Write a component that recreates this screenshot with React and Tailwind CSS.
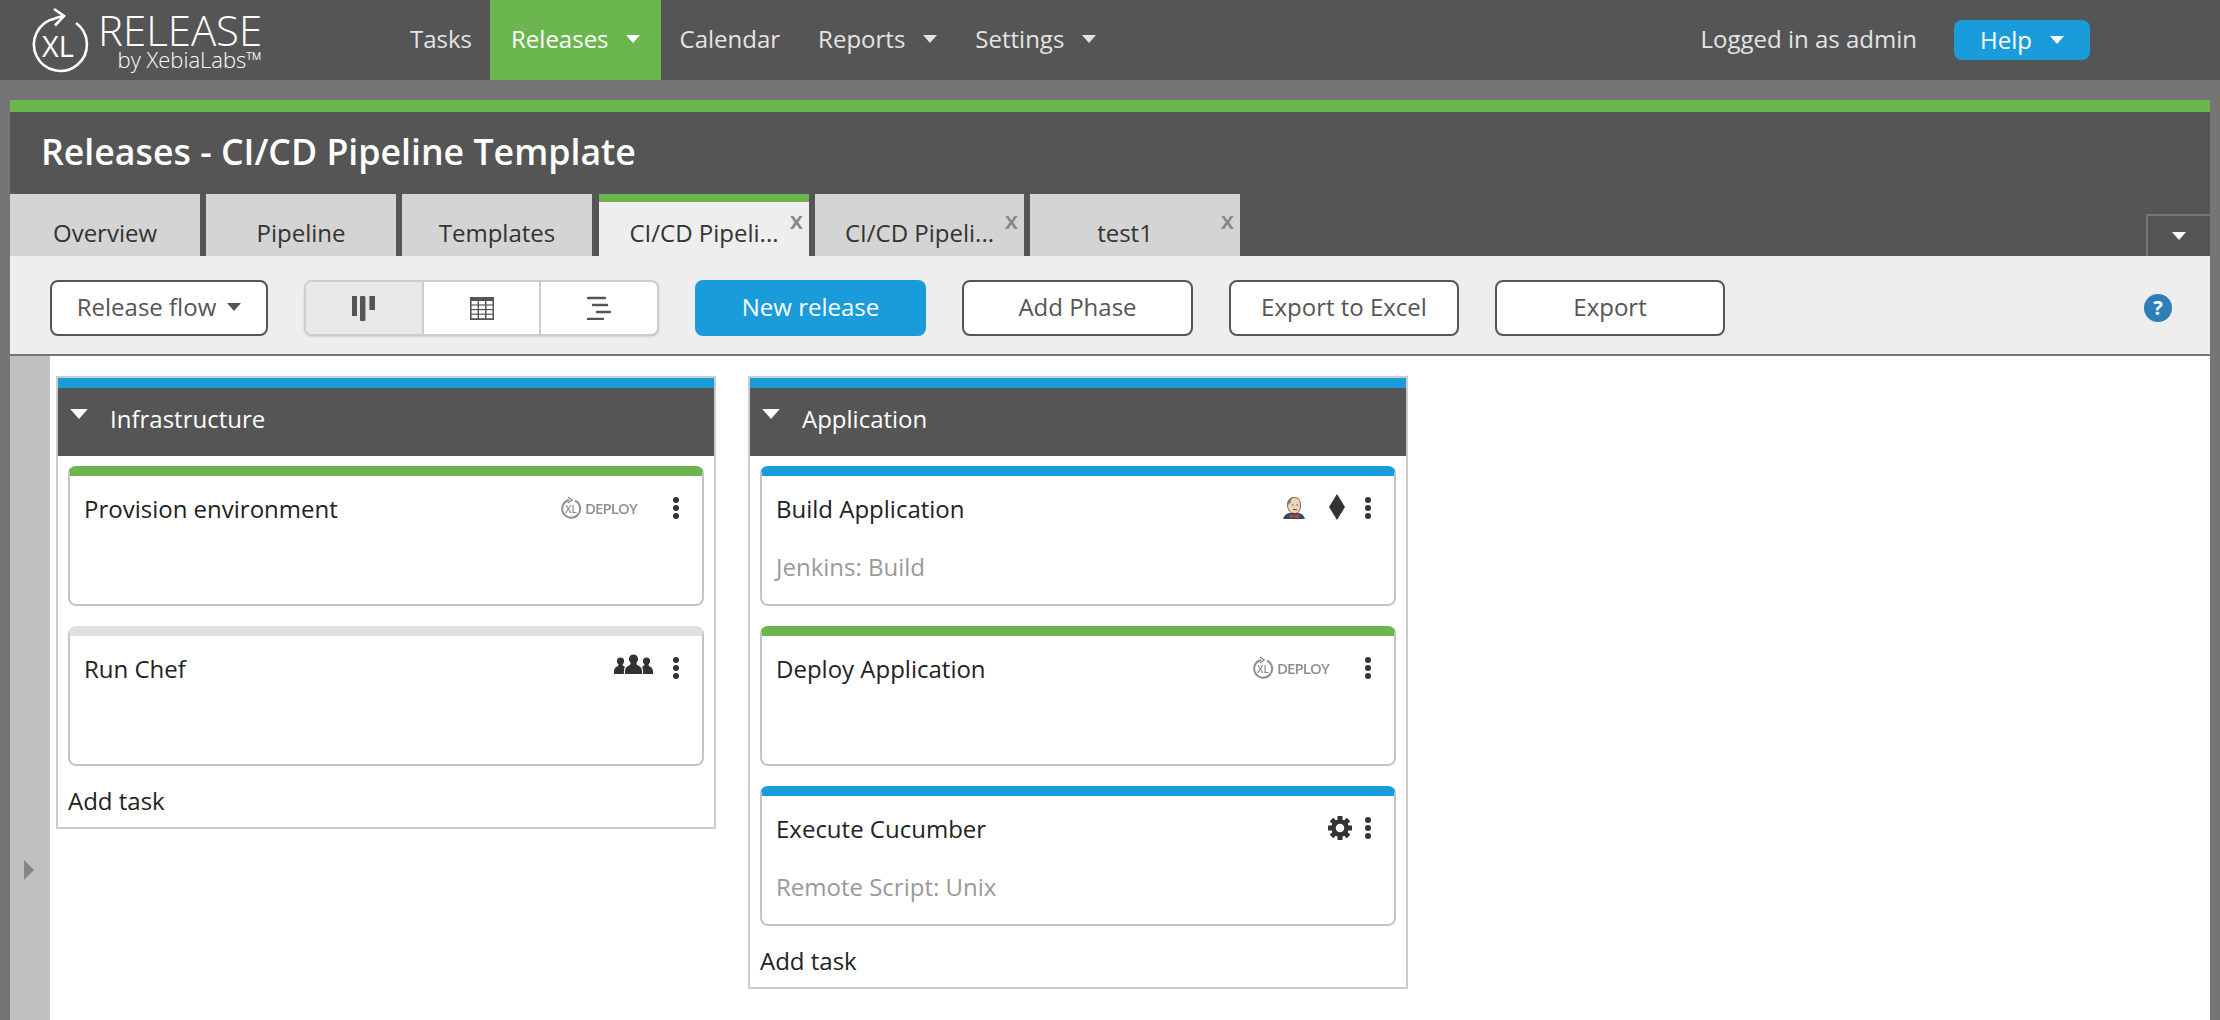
import React from "react";

function Caret({ className = "", color = "#e8e8e8" }) {
  return (
    <svg viewBox="0 0 14 8" className={className} width="14" height="8">
      <path d="M0 0h14L7 8z" fill={color} />
    </svg>
  );
}

function Logo() {
  return (
    <svg width="64" height="80" viewBox="0 0 64 80" className="ml-[27px] shrink-0">
      <path d="M28 18.500A26.500 26.500 0 1 0 49 23" fill="none" stroke="#fff" strokeWidth="2.600" />
      <path d="M28 18.500C31 17 34 16.500 37 16M27 9l10 7-9 9.500" fill="none" stroke="#fff" strokeWidth="2.600" />
      <text x="31" y="57" textAnchor="middle" fontSize="29" fill="#fff" fontFamily="'Open Sans'">
        XL
      </text>
    </svg>
  );
}

function NavItem({ label, caret, active, className = "" }) {
  return (
    <div
      className={`h-full flex items-center pb-[2px] ${
        active ? "bg-[#6cb650] text-white px-[21px] gap-[17px]" : "text-[#e4e4e4] px-[19px] gap-[18px]"
      } ${className}`}
    >
      <span>{label}</span>
      {caret && <Caret color={active ? "#fff" : "#e4e4e4"} />}
    </div>
  );
}

function TopNav() {
  return (
    <div className="h-20 shrink-0 bg-[#555555] flex items-center text-[24px]">
      <div className="w-[391px] h-full flex items-center text-white">
        <Logo />
        <div className="ml-[7px] pt-[2px] flex flex-col items-end">
          <span className="text-[42px] leading-[37px] font-light">RELEASE</span>
          <span className="text-[22px] leading-[23px] font-light">by XebiaLabs™</span>
        </div>
      </div>
      <NavItem label="Tasks" className="pr-[18px]" />
      <NavItem label="Releases" caret active />
      <NavItem label="Calendar" />
      <NavItem label="Reports" caret />
      <NavItem label="Settings" caret />
      <span className="ml-auto pb-[2px] text-[#e4e4e4]">Logged in as admin</span>
      <div className="ml-[37px] mr-[130px] w-[136px] h-10 rounded-lg bg-[#1a9cdb] text-white flex items-center justify-center gap-[18px]">
        Help
        <Caret color="#fff" />
      </div>
    </div>
  );
}

function Tab({ label, width, active, closable, className = "" }) {
  return (
    <div
      style={{ width }}
      className={`relative h-full flex items-center justify-center text-[24px] text-[#333] ${
        active ? "bg-[#eeeeee] border-t-8 border-[#6cb650] pt-[7px]" : "bg-[#d4d4d4] pt-[15px]"
      } ${className}`}
    >
      <span>{label}</span>
      {closable && (
        <span
          className={`absolute right-[6px] text-[24px] leading-6 font-semibold text-[#888] ${
            active ? "top-[6px]" : "top-[14px]"
          }`}
        >
          x
        </span>
      )}
    </div>
  );
}

function Tabs() {
  return (
    <div className="h-[62px] shrink-0 flex items-end">
      <div className="h-full flex gap-[6px]">
        <Tab label="Overview" width={190} />
        <Tab label="Pipeline" width={190} />
        <Tab label="Templates" width={190} />
        <div className="ml-px h-full">
          <Tab label="CI/CD Pipeli..." width={210} active closable />
        </div>
        <Tab label="CI/CD Pipeli..." width={209} closable />
        <Tab label="test1" width={210} closable className="pr-[20px]" />
      </div>
      <div className="ml-auto w-16 h-[42px] border-2 border-b-0 border-r-0 border-[#757575] flex items-center justify-center">
        <Caret color="#fff" />
      </div>
    </div>
  );
}

function ToolButton({ label, width, primary }) {
  return (
    <button
      style={{ width }}
      className={`h-14 pb-[2px] rounded-lg text-[24px] ${
        primary ? "bg-[#1a9cdb] text-white" : "bg-white border-2 border-[#555] text-[#555]"
      }`}
    >
      {label}
    </button>
  );
}

const tableRows = [4, 8.6, 13.2, 17.8];
const tableCols = [1.6, 9, 16.5];

function ViewSwitch() {
  return (
    <div className="w-[355px] h-14 flex rounded-lg bg-white border-2 border-[#cccccc] shadow-sm overflow-hidden">
      <div className="flex-1 bg-[#e8e8e8] border-r-2 border-[#cccccc] flex items-center justify-center">
        <svg width="23" height="25" viewBox="0 0 23 25" fill="#555">
          <rect x="0" y="0" width="5" height="20" />
          <rect x="8" y="0" width="5.4" height="25" rx="1" />
          <rect x="17.4" y="0" width="5.6" height="14" />
        </svg>
      </div>
      <div className="flex-1 border-r-2 border-[#cccccc] flex items-center justify-center">
        <svg width="24" height="23" viewBox="0 0 24 23">
          <rect width="24" height="23" fill="#555" />
          {tableRows.map((y) =>
            tableCols.map((x) => <rect key={`${x}-${y}`} x={x} y={y} width="6" height="3.4" fill="#fff" />)
          )}
        </svg>
      </div>
      <div className="flex-1 flex items-center justify-center">
        <svg width="24" height="24" viewBox="0 0 24 24" stroke="#555" strokeWidth="2.4" strokeLinecap="round">
          <path d="M1 2h17M6 9h14M10 16h13M1 23h15" />
        </svg>
      </div>
    </div>
  );
}

function Toolbar() {
  return (
    <div className="h-[100px] shrink-0 bg-[#eeeeee] border-b-2 border-[#757575] flex items-center gap-9 pl-10 pt-[6px]">
      <div className="w-[218px] h-14 pb-[2px] rounded-lg bg-white border-2 border-[#555] text-[24px] text-[#555] flex items-center justify-center gap-[11px]">
        Release flow
        <Caret color="#555" />
      </div>
      <ViewSwitch />
      <ToolButton label="New release" width={231} primary />
      <ToolButton label="Add Phase" width={231} />
      <ToolButton label="Export to Excel" width={230} />
      <ToolButton label="Export" width={230} />
      <div className="ml-auto mr-[38px] w-7 h-7 rounded-full bg-[#2d7fb8] text-white text-[20px] font-bold flex items-center justify-center">
        ?
      </div>
    </div>
  );
}

function Dots() {
  return (
    <svg width="8" height="24" viewBox="0 0 8 24" fill="#333" className="shrink-0">
      <circle cx="4" cy="4" r="3" />
      <circle cx="4" cy="12" r="3" />
      <circle cx="4" cy="20" r="3" />
    </svg>
  );
}

function DeployIcon() {
  return (
    <div className="flex items-center gap-[3px] mr-[35px] text-[#8f8f8f] blur-[0.5px]">
      <svg width="22" height="24" viewBox="0 0 22 24" className="shrink-0">
        <path d="M9 4A9 9 0 1 0 15 4.6" fill="none" stroke="#8f8f8f" strokeWidth="2" />
        <path d="M8 1l4 3-4 3" fill="none" stroke="#8f8f8f" strokeWidth="1.5" />
        <text x="11" y="17" textAnchor="middle" fontSize="10" fontWeight="600" fill="#8f8f8f" fontFamily="'Open Sans'">
          XL
        </text>
      </svg>
      <span className="text-[15px] leading-6 font-semibold tracking-[-0.9px]">DEPLOY</span>
    </div>
  );
}

function GroupIcon() {
  return (
    <svg width="39" height="20" viewBox="0 0 39 20" fill="#333" className="mr-[19px] -mt-2 shrink-0">
      <circle cx="19.5" cy="5" r="4.6" />
      <path d="M17 8h5l1 3c3 1 5 3 5 6v3H11v-3c0-3 2-5 5-6z" />
      <circle cx="6.5" cy="7" r="3.6" />
      <path d="M4.800 9.500h3.400l.7 2c1 .5 1.600 1 2 1.800-.7 1-1 2.300-1 3.700v3H0v-3c0-2.500 2-4 4.200-5.200z" />
      <circle cx="32.5" cy="7" r="3.6" />
      <path d="M34.200 9.500h-3.400l-.7 2c-1 .5-1.600 1-2 1.800.7 1 1 2.300 1 3.700v3h9.900v-3c0-2.500-2-4-4.200-5.200z" />
    </svg>
  );
}

function GearIcon() {
  return (
    <svg width="24" height="24" viewBox="0 0 24 24" fill="#333" className="mr-3 shrink-0">
      <circle cx="12" cy="12" r="6.5" fill="none" stroke="#333" strokeWidth="4.5" />
      {[0, 45, 90, 135, 180, 225, 270, 315].map((a) => (
        <rect key={a} x="9.5" y="0" width="5" height="6" transform={`rotate(${a} 12 12)`} />
      ))}
    </svg>
  );
}

function JenkinsIcon() {
  return (
    <svg width="22" height="22" viewBox="0 0 22 22" className="mr-[24px] shrink-0">
      <path d="M0 22c1-3.500 3-5 6-6h10c3 1 5 2.500 6 6z" fill="#2b4f6b" />
      <path d="M4.500 8c0-5 3-7.500 7-7.500s6 2.500 6 7.500-2 8.500-6 8.500-7-3.500-7-8.500z" fill="#efd3b4" stroke="#333" strokeWidth="0.7" />
      <path d="M4.500 10C3 4.500 6.500 0 11.500 0 9 1 7.500 3 7.500 6c-1.200 0-2.300 1.500-3 4z" fill="#7a7a7a" />
      <path d="M9 8h1.500M13.500 8H15M10 12.500h4" stroke="#444" strokeWidth="0.9" />
      <path d="M6.500 17l4.500 1.500 4.500-1.500v4.500L11 20l-4.500 1.500z" fill="#d33833" />
    </svg>
  );
}

function DiamondIcon() {
  return (
    <svg width="16" height="26" viewBox="0 0 16 26" className="mr-[19px] -mt-[3px] shrink-0">
      <path d="M8 0l8 13-8 13-8-13z" fill="#333" />
    </svg>
  );
}

function TaskCard({ title, subtitle, barClass, children }) {
  return (
    <div className={`h-[140px] rounded-lg border-2 border-t-[10px] border-[#c4c4c4] bg-white pl-[14px] pr-[22px] ${barClass}`}>
      <div className="flex items-start justify-between pt-[19px]">
        <span className="text-[24px] leading-7 text-[#222]">{title}</span>
        <div className="flex items-center pt-px">
          {children}
          <Dots />
        </div>
      </div>
      {subtitle && <div className="mt-[30px] text-[24px] leading-7 text-[#999]">{subtitle}</div>}
    </div>
  );
}

function Phase({ name, children }) {
  return (
    <div className="w-[660px] self-start border-2 border-[#cccccc] bg-white">
      <div className="h-2.5 bg-[#1a9cdb]" />
      <div className="h-[68px] bg-[#555555] flex items-center pl-3 text-white text-[24px]">
        <Caret color="#fff" className="w-[18px] h-[10px] -mt-[16px]" />
        <span className="ml-[22px] pb-[6px]">{name}</span>
      </div>
      <div className="px-[10px] pt-[10px] flex flex-col gap-5">{children}</div>
      <div className="h-[61px] pl-[10px] pt-[9px] flex items-center text-[24px] text-[#222]">Add task</div>
    </div>
  );
}

export default function App() {
  return (
    <div
      className="h-screen w-full overflow-hidden bg-[#757575] flex flex-col"
      style={{ fontFamily: "'Open Sans', 'Liberation Sans', sans-serif" }}
    >
      <TopNav />
      <div className="mt-5 mx-[10px] flex-1 min-h-0 flex flex-col">
        <div className="h-3 shrink-0 bg-[#6cb650]" />
        <div className="h-[82px] shrink-0 bg-[#555555] flex items-center pl-[31px] pb-[2px] text-[35.7px] font-semibold text-white">
          Releases - CI/CD Pipeline Template
        </div>
        <div className="bg-[#555555]">
          <Tabs />
        </div>
        <Toolbar />
        <div className="flex-1 min-h-0 flex">
          <div className="w-10 shrink-0 bg-[#c0c0c0] pl-[14px] pt-[504px]">
            <svg width="10" height="20" viewBox="0 0 10 20">
              <path d="M0 0l10 10L0 20z" fill="#858585" />
            </svg>
          </div>
          <div className="flex-1 bg-white pl-[6px] pt-5 flex gap-8">
            <Phase name="Infrastructure">
              <TaskCard title="Provision environment" barClass="border-t-[#6cb650]">
                <DeployIcon />
              </TaskCard>
              <TaskCard title="Run Chef" barClass="border-t-[#e0e0e0]">
                <GroupIcon />
              </TaskCard>
            </Phase>
            <Phase name="Application">
              <TaskCard title="Build Application" subtitle="Jenkins: Build" barClass="border-t-[#1a9cdb]">
                <JenkinsIcon />
                <DiamondIcon />
              </TaskCard>
              <TaskCard title="Deploy Application" barClass="border-t-[#6cb650]">
                <DeployIcon />
              </TaskCard>
              <TaskCard title="Execute Cucumber" subtitle="Remote Script: Unix" barClass="border-t-[#1a9cdb]">
                <GearIcon />
              </TaskCard>
            </Phase>
          </div>
        </div>
      </div>
    </div>
  );
}
